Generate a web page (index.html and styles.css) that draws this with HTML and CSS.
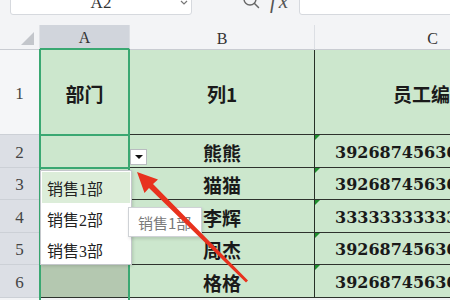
FILE: index.html
```html
<!DOCTYPE html>
<html lang="zh">
<head>
<meta charset="utf-8">
<title>Sheet</title>
<link rel="stylesheet" href="styles.css">
</head>
<body>
<div class="toolbar">
  <div class="namebox">
    <span class="ref">A2</span>
    <svg class="nb-caret" width="8" height="6" viewBox="0 0 8 6"><path d="M1 1 L4 4 L7 1" fill="none" stroke="#777" stroke-width="1.2"/></svg>
  </div>
  <svg class="search" width="22" height="18" viewBox="0 0 22 18"><circle cx="8" cy="2" r="6" fill="none" stroke="#666" stroke-width="1.4"/><path d="M12.5 6.5 L16.5 10.5" stroke="#666" stroke-width="1.5" stroke-linecap="round"/></svg>
  <span class="fx">fx</span>
  <div class="formula"></div>
</div>
<div class="sheet">
  <div class="corner"><span class="tri"></span></div>
  <div class="colhead active-col">A</div>
  <div class="colhead">B</div>
  <div class="colhead">C</div>

  <div class="rowhead first">1</div>
  <div class="cell bold">部门</div>
  <div class="cell bold">列1</div>
  <div class="cell bold title-c">员工编号</div>

  <div class="rowhead">2</div>
  <div class="cell"></div>
  <div class="cell bold">熊熊</div>
  <div class="cell num">392687456361234567</div>

  <div class="rowhead">3</div>
  <div class="cell"></div>
  <div class="cell bold">猫猫</div>
  <div class="cell num">392687456361234568</div>

  <div class="rowhead">4</div>
  <div class="cell"></div>
  <div class="cell bold">李辉</div>
  <div class="cell num">333333333333333333</div>

  <div class="rowhead">5</div>
  <div class="cell"></div>
  <div class="cell bold">周杰</div>
  <div class="cell num">392687456361234569</div>

  <div class="rowhead">6</div>
  <div class="cell shade"></div>
  <div class="cell bold">格格</div>
  <div class="cell num">392687456361234570</div>

  <div class="sel-range"></div>
  <div class="active-cell"></div>
  <div class="dd-btn"><span class="dd-tri"></span></div>
  <ul class="dd-list">
    <li class="hover">销售1部</li>
    <li>销售2部</li>
    <li>销售3部</li>
  </ul>
  <div class="tip">销售1部</div>
  <svg class="arrow" width="300" height="275" viewBox="0 0 300 275"><polygon points="137,147 158,154.5 153,159 248,255.5 246,257.5 149,163 144.5,168" fill="#e8321e"/></svg>
</div>
</body>
</html>
```
FILE: styles.css
```css
html, body {
  margin: 0;
  padding: 0;
}
body {
  width: 450px;
  height: 300px;
  overflow: hidden;
  background: #f3f4f6;
  font-family: "Liberation Serif", "Noto Sans CJK SC", serif;
  color: #222;
}
.toolbar {
  height: 25px;
  display: flex;
  align-items: flex-start;
  background: #f3f4f6;
  overflow: hidden;
}
.namebox {
  margin-left: 10px;
  margin-top: -10px;
  width: 180px;
  height: 23px;
  background: #fff;
  border: 1px solid #d6d9de;
  border-radius: 3px;
  position: relative;
  display: flex;
  align-items: center;
  justify-content: center;
}
.ref {
  font-family: "Liberation Serif", serif;
  font-size: 17px;
  color: #333;
  line-height: 1;
  margin-top: -1px;
}
.nb-caret {
  position: absolute;
  right: 3px;
  top: 9px;
}
.search {
  margin-left: 50px;
  margin-top: -3px;
}
.fx {
  margin-left: 6px;
  margin-top: -9px;
  font-family: "Liberation Serif", serif;
  font-style: italic;
  font-size: 21px;
  letter-spacing: 3px;
  color: #555;
  line-height: 1;
}
.formula {
  margin-left: 8px;
  margin-top: -10px;
  flex: 1;
  height: 23px;
  background: #fff;
  border: 1px solid #d6d9de;
  border-radius: 3px;
  margin-right: -5px;
}
.sheet {
  position: relative;
  display: grid;
  grid-template-columns: 40px 90px 185px 236px;
  grid-template-rows: 25px 85px 33px 32px 33px 32px 33px;
  width: 551px;
}
.corner {
  background: #f3f4f6;
  border-right: 1px solid #e0e2e6;
  border-bottom: 1px solid #c9ccd2;
  position: relative;
}
.tri {
  position: absolute;
  right: 5px;
  bottom: 4px;
  width: 0;
  height: 0;
  border-left: 13px solid transparent;
  border-bottom: 13px solid #c3c6cb;
}
.colhead {
  background: #f3f4f6;
  border-right: 1px solid #dcdfe4;
  border-bottom: 1px solid #c9ccd2;
  display: flex;
  align-items: center;
  justify-content: center;
  font-family: "Liberation Serif", serif;
  font-size: 16px;
  color: #333;
  padding-top: 3px;
  box-sizing: border-box;
}
.colhead.active-col {
  background: #d1d5dc;
  border-bottom: 2px solid #3aa872;
}
.rowhead {
  background: #dcdfe5;
  border-right: 1px solid #c9ccd2;
  border-bottom: 1px solid #ccd0d6;
  display: flex;
  align-items: center;
  justify-content: center;
  font-family: "Liberation Serif", serif;
  font-size: 17px;
  color: #444;
  box-sizing: border-box;
  padding-top: 3px;
}
.rowhead.first {
  background: #f5f6f8;
}
.cell {
  position: relative;
  background: #cce7cd;
  border-right: 1px solid #273027;
  border-bottom: 1px solid #2d332d;
  box-sizing: border-box;
  display: flex;
  align-items: center;
  justify-content: center;
  white-space: nowrap;
  overflow: hidden;
}
.cell.shade {
  background: #b4c8b0;
}
.bold {
  font-family: "Noto Sans CJK SC", sans-serif;
  font-weight: 700;
  font-size: 19px;
  color: #1a1a1a;
  padding-top: 2px;
}
.title-c {
  justify-content: flex-start;
  padding-left: 78px;
}
.num {
  justify-content: flex-start;
  padding-left: 20px;
  font-family: "DejaVu Serif", serif;
  font-weight: 700;
  font-size: 16px;
  color: #1a1a1a;
  padding-top: 2px;
}
.num::before {
  content: "";
  position: absolute;
  left: 0;
  top: 0;
  width: 0;
  height: 0;
  border-top: 5px solid #1f8f2e;
  border-right: 5px solid transparent;
}
.sel-range {
  position: absolute;
  left: 39px;
  top: 24px;
  width: 91px;
  height: 300px;
  border-left: 2px solid #3aa872;
  border-right: 2px solid #3aa872;
  box-sizing: border-box;
}
.active-cell {
  position: absolute;
  left: 39px;
  top: 109px;
  width: 91px;
  height: 35px;
  border: 2px solid #3aa872;
  box-sizing: border-box;
}
.dd-btn {
  position: absolute;
  left: 130px;
  top: 124px;
  width: 17px;
  height: 16px;
  background: #fff;
  border: 1px solid #b9bcc0;
  box-sizing: border-box;
  display: flex;
  align-items: center;
  justify-content: center;
}
.dd-tri {
  width: 0;
  height: 0;
  border-left: 4px solid transparent;
  border-right: 4px solid transparent;
  border-top: 4px solid #111;
}
.dd-list {
  position: absolute;
  left: 40px;
  top: 145px;
  width: 92px;
  height: 95px;
  margin: 0;
  padding: 1px;
  list-style: none;
  background: #fff;
  border: 1px solid #c4c7cb;
  box-sizing: border-box;
  box-shadow: 1px 1px 3px rgba(0,0,0,0.15);
}
.dd-list li {
  height: 31px;
  display: flex;
  align-items: center;
  padding-left: 5px;
  font-family: "Liberation Serif", "Noto Sans CJK SC", serif;
  font-size: 16px;
  color: #222;
}
.dd-list li.hover {
  background: #dcedd9;
}
.tip {
  position: absolute;
  left: 128px;
  top: 182px;
  width: 74px;
  height: 30px;
  background: #fff;
  border: 1px solid #cfd2d6;
  box-sizing: border-box;
  box-shadow: 1px 2px 3px rgba(0,0,0,0.12);
  font-family: "Noto Sans CJK SC", sans-serif;
  font-size: 15px;
  color: #7a7a7a;
  display: flex;
  align-items: center;
  padding-left: 9px;
  white-space: nowrap;
  overflow: hidden;
}
.arrow {
  position: absolute;
  left: 0;
  top: 0;
}
```
